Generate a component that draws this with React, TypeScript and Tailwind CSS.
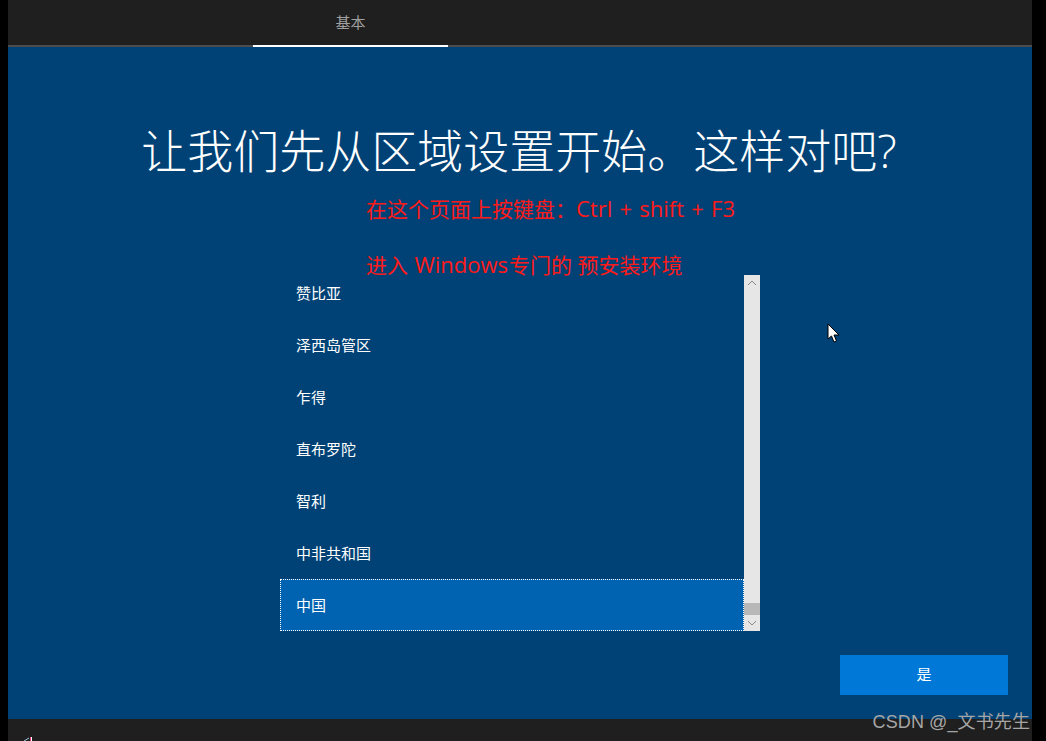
const cjk = "font-['Liberation_Sans','Noto_Sans_CJK_SC',sans-serif]";
const humanist = "font-['Open_Sans','Noto_Sans_CJK_SC',sans-serif]";

const regions = ["赞比亚", "泽西岛管区", "乍得", "直布罗陀", "智利", "中非共和国"];

const App = () => {
  return (
    <div className={`relative flex h-[741px] w-[1046px] overflow-hidden bg-black pl-2 pr-[14px] ${cjk}`}>
      <div className="flex min-w-0 flex-1 flex-col">
        {/* top tabs */}
        <div className="flex h-[47px] shrink-0 border-b-2 border-[#4c4c4c] bg-[#1f1f1f] pl-[245px]">
          <div className="-mb-[2px] flex h-[47px] w-[195px] items-center justify-center border-b-2 border-white pt-[2px] text-[15px] text-[#a0a0a0]">
            基本
          </div>
        </div>

        {/* main panel */}
        <div className="flex flex-1 flex-col bg-[#004275]">
          <h1 className={`mt-[73px] h-[60px] pr-[2px] text-center text-[46px] leading-[60px] font-extralight text-white ${humanist}`}>
            让我们先从区域设置开始。这样对吧?
          </h1>

          <div className="mt-[95px] ml-[272px] flex h-[356px] w-[480px]">
            <div className="flex h-full flex-1 flex-col justify-end overflow-hidden">
              {regions.map((name) => (
                <div key={name} className="flex h-[52px] shrink-0 items-center pt-[2px] pl-4 text-[15px] text-white">
                  {name}
                </div>
              ))}
              <div className="flex h-[52px] shrink-0 items-center border border-dotted border-white bg-[#0063b1] pt-[2px] pl-[15px] text-[15px] text-white">
                中国
              </div>
            </div>
            <div className="flex h-full w-4 shrink-0 flex-col bg-[#e6e6e6]">
              <div className="flex h-4 items-center justify-center">
                <svg width="10" height="6" viewBox="0 0 10 6" fill="none" stroke="#8a8a8a" strokeWidth="1">
                  <path d="M1 5 L5 1 L9 5" />
                </svg>
              </div>
              <div className="flex-1" />
              <div className="h-3 bg-[#b8b8b8]" />
              <div className="flex h-4 items-center justify-center">
                <svg width="10" height="6" viewBox="0 0 10 6" fill="none" stroke="#8a8a8a" strokeWidth="1">
                  <path d="M1 1 L5 5 L9 1" />
                </svg>
              </div>
            </div>
          </div>

          <div className="mt-6 flex justify-end pr-6">
            <button className="h-10 w-[168px] bg-[#0078d7] text-[15px] text-white">是</button>
          </div>
        </div>

        {/* bottom bar */}
        <div className="h-[22px] shrink-0 bg-[#1f1f1f]" />
      </div>

      {/* pasted annotation */}
      <div className={`absolute top-[190px] left-[366px] text-[21px] leading-[36px] text-[#ff1a1a] ${humanist}`}>
        <p>
          在这个页面上按键盘：<span className="text-[22px] [word-spacing:1.5px]">Ctrl + shift + F3</span>
        </p>
        <p className="mt-[19px]">
          进入 <span className="mx-px text-[22px]">Windows</span>专门的 预安装环境
        </p>
      </div>

      {/* mouse cursor */}
      <svg className="absolute top-[323px] left-[827px]" width="14" height="21" viewBox="0 0 14 21">
        <path d="M1 1 L1 16 L4.5 13 L7 19 L9.5 18 L7 12 L12 12 Z" fill="#fff" stroke="#000" strokeWidth="1" />
      </svg>

      {/* taskbar icon sliver */}
      <svg className="absolute top-[737px] left-[24px]" width="10" height="4" viewBox="0 0 10 4">
        <path d="M0 4 L5 1" stroke="#9fc4e0" strokeWidth="1" />
        <rect x="6" y="0" width="1" height="4" fill="#e0407a" />
        <rect x="7" y="0" width="1" height="4" fill="#ffffff" />
      </svg>

      {/* watermark */}
      <div className="absolute top-[710px] right-4 text-[18px] leading-6 tracking-[0.1px] text-[#a6a6a6]">CSDN @_文书先生</div>
    </div>
  );
};

export default App;
